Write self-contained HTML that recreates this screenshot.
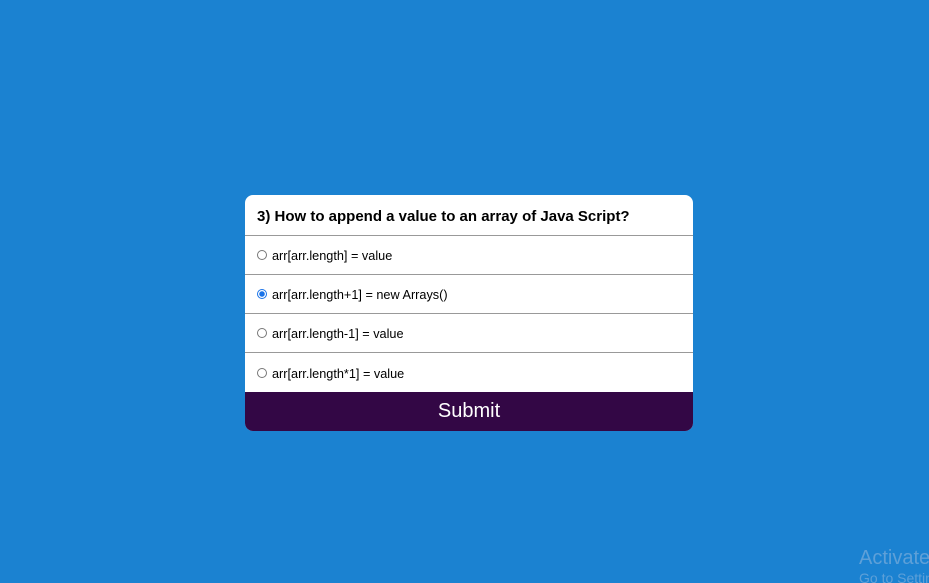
<!DOCTYPE html>
<html><head><style>
html,body{margin:0;width:929px;height:583px;overflow:hidden}
body{background:#1b82d1;font-family:"Liberation Sans",Arial,sans-serif;position:relative}
.card{position:absolute;left:245px;top:195px;width:448px;height:236px;background:#fff;border-radius:8px;overflow:hidden}
.h{height:41px;box-sizing:border-box;border-bottom:1px solid #999;font-weight:bold;font-size:15px;padding:13px 0 0 12px;color:#000}
.r{height:39px;box-sizing:border-box;border-bottom:1px solid #999;font-size:12.7px;display:flex;align-items:center;padding-left:12px;color:#000;padding-top:2px}
.rd{width:8px;height:8px;border:1px solid #777;border-radius:50%;margin-right:5px;position:relative;top:-1px}
.rd.on{border-color:#1a73e8;background:radial-gradient(circle,#1a73e8 0 2.5px,#fff 3px)}
.s{position:absolute;left:0;top:197px;width:448px;height:39px;background:#330745;color:#fff;font-size:20px;text-align:center;line-height:39px}
.wm{position:absolute;left:859px;top:546px;width:70px;height:37px;overflow:hidden;color:#5ea0d8;white-space:nowrap}
.act{font-size:20px;line-height:24px}
.go{font-size:14px;line-height:16px}
</style></head><body>
<div class="card">
<div class="h">3) How to append a value to an array of Java Script?</div>
<div class="r"><span class="rd"></span>arr[arr.length] = value</div>
<div class="r"><span class="rd on"></span>arr[arr.length+1] = new Arrays()</div>
<div class="r"><span class="rd"></span>arr[arr.length-1] = value</div>
<div class="r" style="border-bottom:none"><span class="rd"></span>arr[arr.length*1] = value</div>
<div class="s">Submit</div>
</div>
<div class="wm"><div class="act">Activate Windows</div><div class="go">Go to Settings</div></div>
</body></html>
